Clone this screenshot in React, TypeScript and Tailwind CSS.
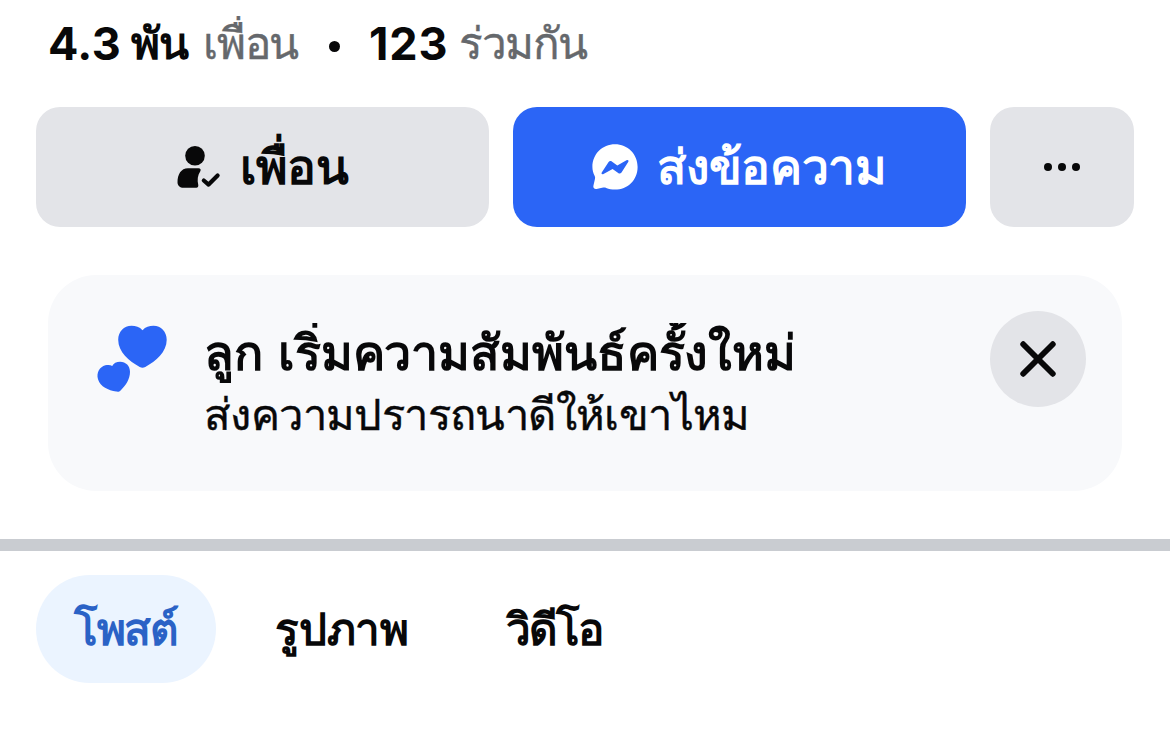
const FriendIcon = () => (
  <svg className="w-[44px] h-[44px]" viewBox="0 0 44 44" fill="none">
    <circle cx="18" cy="10.7" r="9.8" fill="#080809" />
    <path
      d="M11 23.2H21.5C23.5 23.2 24.2 24.6 23.3 26.2C20.5 30.5 20.2 35 21.2 39.5C21.6 41.2 21 42.8 19.3 42.8H6.5C3 42.8 0.5 40.6 0.5 37.2C0.5 29.5 4 23.2 11 23.2Z"
      fill="#080809"
    />
    <path d="M26.8 35.5L31.6 39.6L40.6 30.6" stroke="#080809" strokeWidth="4.2" strokeLinecap="round" strokeLinejoin="round" />
  </svg>
);

const MessengerIcon = () => (
  <svg className="w-[46px] h-[46px]" viewBox="0 0 46 46" fill="none">
    <path
      d="M23 0.2C35.6 0.2 45.6 9.8 45.6 22.9C45.6 36 35.6 45.6 23 45.6C19.8 45.6 16.9 45 14.2 43.9C13.2 43.5 12.2 43.4 11.2 43.6L4.6 44.9C2.4 45.3 0.9 43.8 1.4 41.7L3 34.8C3.3 33.7 3.1 32.7 2.6 31.7C1.2 29 0.4 26.1 0.4 22.9C0.4 9.8 10.4 0.2 23 0.2Z"
      fill="#fff"
    />
    <path
      d="M9.9 28.3L16.6 18.1C17.4 16.9 18.7 16.7 19.8 17.5L25.3 21.5L34.5 16.2C36 15.4 37.1 16.6 36.2 17.9L29.5 28.4C28.7 29.6 27.4 29.9 26.2 29L20.6 24.9L11.5 30C10.1 30.8 8.9 29.7 9.9 28.3Z"
      fill="#2b65f6"
    />
  </svg>
);

const HeartsIcon = () => (
  <svg className="w-[72px] h-[70px]" viewBox="0 0 72 70" fill="#2b65f6">
    <path d="M46.5 5.2C49.5 1.8 53.3 0.7 57.5 0.7C65 0.7 70.7 6.5 70.7 14.8C70.7 27 60 36 49.3 42C47.3 43.1 45.6 43.1 43.7 42C33 36 22.2 27 22.2 14.8C22.2 6.5 27.9 0.7 35.5 0.7C39.7 0.7 43.5 1.8 46.5 5.2Z" />
    <path d="M16.2 40.9C17.5 38.4 20.5 36.8 24.1 36.8C29.9 36.8 34 41 34 46.8C34 54.2 29.8 60.4 24.8 65.2C23.3 66.7 22.3 67 20.2 66.6C12.3 65.2 4.4 61.8 2 54.2C0.1 47.6 3.8 41.8 9.3 40.3C11.9 39.6 14.6 39.8 16.2 40.9Z" />
  </svg>
);

export default function App() {
  return (
    <div className="h-[744px] w-[1170px] overflow-hidden bg-white font-['Inter','Noto_Sans',sans-serif] text-[#080809]">
      {/* Friend counts */}
      <div className="mt-4 h-[71px] overflow-hidden">
        <div className="-mt-4 flex h-[87px] items-center pl-[48px] text-[44px] leading-[87px] whitespace-nowrap">
          <span className="w-[83px] text-[45px] font-bold tracking-[0.4px]">4.3</span>
          <span className="w-[72px] font-semibold tracking-[-1px]">พัน</span>
          <span className="w-[126px] tracking-[-1.2px] text-[#65686c] [-webkit-text-stroke:0.4px]">เพื่อน</span>
          <span className="mt-[5px] size-[11px] rounded-full bg-[#080809]" />
          <span className="ml-[29px] w-[90px] text-[45px] font-bold tracking-[0.9px]">123</span>
          <span className="tracking-[-1.4px] text-[#65686c] [-webkit-text-stroke:0.4px]">ร่วมกัน</span>
        </div>
      </div>

      {/* Actions */}
      <div className="mt-5 flex h-[120px] gap-6 px-9 text-[48px] leading-[120px] font-semibold whitespace-nowrap">
        <button className="flex w-[453px] items-center justify-center gap-[19px] rounded-3xl bg-[#e3e4e8] pl-px">
          <FriendIcon />
          <span className="tracking-[-0.2px]">เพื่อน</span>
        </button>
        <button className="flex w-[453px] items-center justify-center gap-[19px] rounded-3xl bg-[#2b65f6] text-white">
          <MessengerIcon />
          <span className="tracking-[-0.3px]">ส่งข้อความ</span>
        </button>
        <button className="flex w-36 items-center justify-center gap-[6px] rounded-3xl bg-[#e3e4e8]">
          <span className="size-2 rounded-full bg-[#080809]" />
          <span className="size-2 rounded-full bg-[#080809]" />
          <span className="size-2 rounded-full bg-[#080809]" />
        </button>
      </div>

      {/* Relationship card */}
      <div className="mx-12 mt-12 flex h-[216px] rounded-[48px] bg-[#f8f9fb] pt-9 pr-9 pl-12">
        <div className="mt-[14px] w-[108px] shrink-0">
          <HeartsIcon />
        </div>
        <div className="mt-3 flex-1 whitespace-nowrap">
          <h2 className="h-[61px] overflow-hidden text-[48.4px] leading-[59px] font-semibold tracking-[-0.1px] [word-spacing:3px]">
            ลูก เริ่มความสัมพันธ์ครั้งใหม่
          </h2>
          <p className="text-[43.5px] leading-[60px] tracking-[-0.6px] [-webkit-text-stroke:0.4px]">ส่งความปรารถนาดีให้เขาไหม</p>
        </div>
        <button className="flex size-24 shrink-0 items-center justify-center rounded-full bg-[#e3e4e8]">
          <svg className="size-9" viewBox="0 0 36 36" stroke="#080809" strokeWidth="5.8" strokeLinecap="round">
            <path d="M3.2 3.2L32.8 32.8M32.8 3.2L3.2 32.8" />
          </svg>
        </button>
      </div>

      <div className="mt-12 h-3 bg-[#c9ccd1]" />

      {/* Tabs */}
      <div className="mt-6 flex h-[108px] pl-9 text-[44px] leading-[108px] font-semibold whitespace-nowrap">
        <span className="w-[180px] rounded-[54px] bg-[#ebf4ff] text-center tracking-[-1.2px] text-[#2a62c6]">โพสต์</span>
        <span className="ml-6 w-[204px] text-center tracking-[-0.2px]">รูปภาพ</span>
        <span className="ml-6 w-[172px] text-center tracking-[-1.8px]">วิดีโอ</span>
      </div>
    </div>
  );
}
